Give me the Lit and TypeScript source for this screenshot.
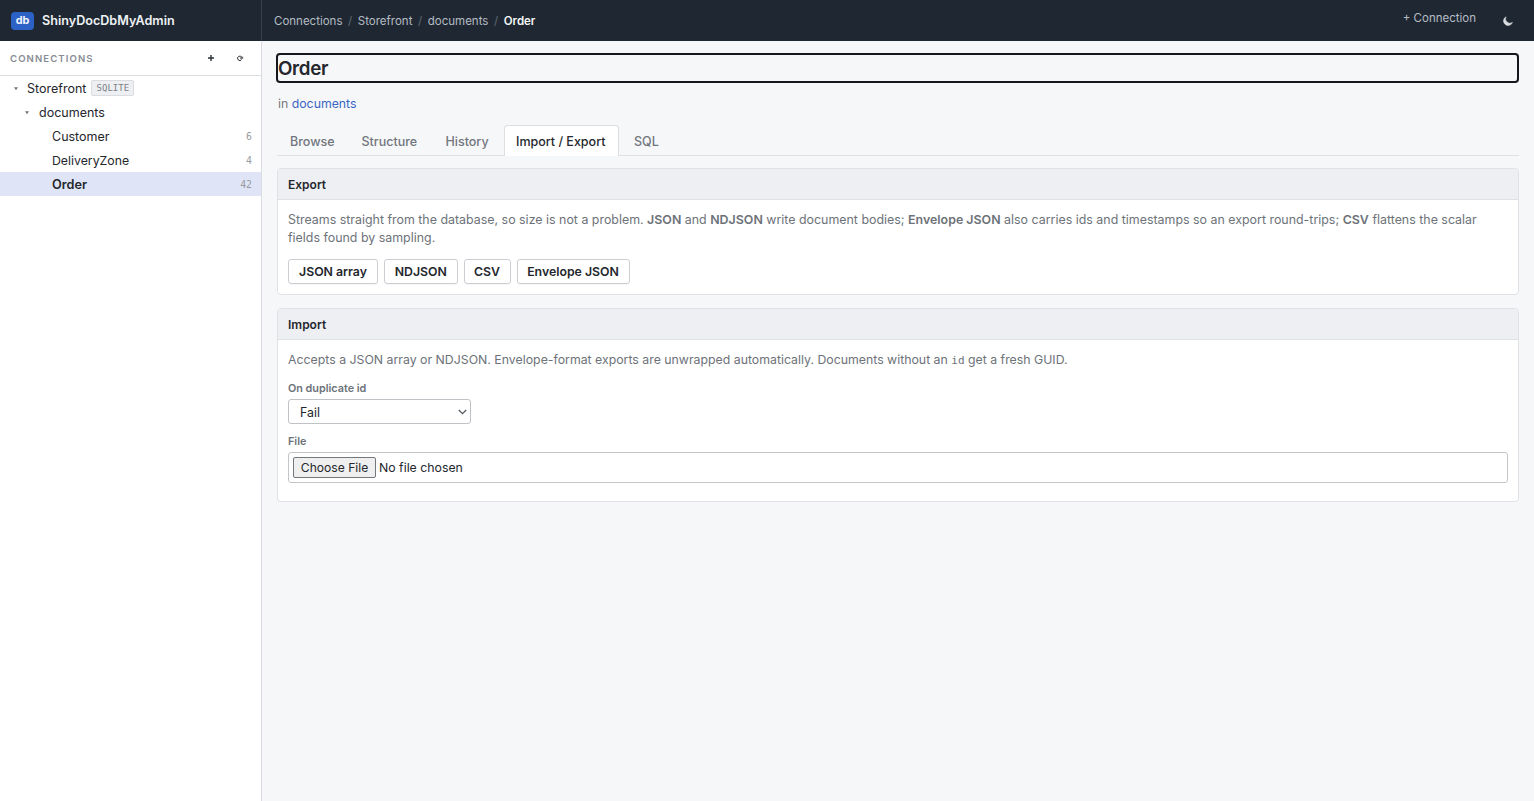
import { LitElement, html, css, svg } from "lit";
import { customElement } from "lit/decorators.js";

interface TreeItem { name: string; count: number; active?: boolean; track: string }

const items: TreeItem[] = [
  { name: "Customer", count: 6, track: "t-customer" },
  { name: "DeliveryZone", count: 4, track: "t-zone" },
  { name: "Order", count: 42, active: true, track: "t-order" },
];

const tabs = [
  { label: "Browse", cls: "w1" },
  { label: "Structure", cls: "w2" },
  { label: "History", cls: "w3" },
  { label: "Import / Export", cls: "w4 on" },
  { label: "SQL", cls: "w5" },
];

@customElement("app-root")
export class AppRoot extends LitElement {
  static styles = css`
    * { box-sizing: border-box; }
    :host {
      display: grid;
      grid-template-columns: 262px 1fr;
      grid-template-rows: 41px 1fr;
      width: 100%;
      height: 100vh;
      overflow: hidden;
      background: #f6f7f9;
      color: #24272d;
      font: 400 13px/18px Inter, "Liberation Sans", sans-serif;
    }
    .brand, .top { background: #1f2832; display: flex; align-items: center; height: 40.5px; padding-top: 1px; }
    .brand { padding-left: 11px; border-right: 1px solid #36404b; color: #eef1f4; font-weight: 600; font-size: 12.6px; }
    .logo { width: 23px; height: 18px; margin-right: 8px; border-radius: 4px; background: #2c62c6; color: #f1f5fc; font-size: 10.8px; line-height: 17px; text-align: center; font-weight: 700; }
    .top { padding: 1px 20px 0 12px; color: #b5bcc4; font-size: 11.5px; }
    .sep { color: #5f6973; margin: 0 5.6px; }
    .here { color: #f3f5f7; font-weight: 600; }
    .grow { flex: 1; }
    .add { margin: 0 26px 6px 0; }
    .moon { display: block; width: 12px; height: 12px; }

    aside { background: #fff; border-right: 1px solid #dadce0; }
    .sidehead { display: flex; align-items: center; height: 35px; padding: 0 16px 0 10px; border-bottom: 1px solid #dcdee2; }
    .cap { flex: 1; color: #888d94; font-size: 9.6px; font-weight: 600; letter-spacing: 1.08px; padding-top: 1px; }
    .icon { width: 10px; height: 10px; margin-left: 19px; }
    .row { display: flex; align-items: center; height: 24px; padding: 1px 9px 0 0; font-size: 12.5px; }
    .row.root { padding-left: 13px; }
    .row.store { padding-left: 24px; }
    .row.store .caret { margin-right: 9px; }
    .row.leaf { padding-left: 52px; }
    .row.active { background: #dfe5f6; font-weight: 600; }
    .t-order { font-size: 12.7px; }
    .t-zone { font-size: 12.3px; }
    .caret { width: 6px; height: 5px; margin-right: 8px; fill: #70757c; }
    .badge { margin-left: 5px; height: 16px; width: 43px; margin-top: -1px; border: 1px solid #dadce0; border-radius: 2px; background: #eeeff2; color: #7c8187; font: 9px/15px "DejaVu Sans Mono", monospace; text-align: center; }
    .count { margin-left: auto; color: #979ba1; font: 9.8px/16px "DejaVu Sans Mono", monospace; }

    main { padding: 14px 15px 0; }
    h1 { margin: 0 2px 0 1px; height: 26px; font-size: 18.8px; line-height: 27px; font-weight: 600; letter-spacing: -0.35px; outline: 2px solid #14171c; border-radius: 2px; }
    .sub { margin: 14px 0 0 1px; height: 18px; color: #777c83; font-size: 12.3px; }
    .link { color: #3b66c4; }
    nav { display: flex; align-items: flex-end; margin: 12px 0 0; height: 31px; border-bottom: 1px solid #dfe1e4; }
    .tab { height: 31px; padding: 0 11px; border: 1px solid transparent; border-bottom: 0; line-height: 34px; font-weight: 500; color: #71767d; margin-right: 3px; white-space: nowrap; font-size: 12.5px; }
    .tab.on { background: #fff; color: #25282e; border-color: #dcdee2; border-radius: 4px 4px 0 0; margin-bottom: -1px; line-height: 31px; }
    .w1 { width: 69px; padding-left: 12px; } .w2 { width: 81px; padding-left: 11.5px; } .w3 { width: 68px; padding-left: 11.5px; } .w4 { width: 115px; }

    section { background: #fff; border: 1px solid #dfe1e4; border-radius: 4px; overflow: hidden; }
    .export { margin-top: 12px; height: 127px; }
    .import { margin-top: 13px; height: 194px; }
    h2 { margin: 0; height: 31px; padding-left: 10px; background: #eeeff3; border-bottom: 1px solid #dfe1e4; font-size: 12px; line-height: 31px; font-weight: 600; }
    .body { padding: 11px 10px 0; }
    p { margin: 0; color: #6d7279; font-size: 12.42px; line-height: 18px; }
    .p2 { font-size: 12.32px; }
    b { font-weight: 600; }
    .btns { display: flex; gap: 6px; margin-top: 12px; }
    .btn { height: 25px; border: 1px solid #cbced3; border-radius: 3px; text-align: center; line-height: 23px; font-weight: 600; font-size: 12.3px; white-space: nowrap; box-shadow: 0 1px 1px #0000000a; }
    .b1 { width: 90px; } .b2 { width: 73.5px; } .b3 { width: 47px; } .b4 { width: 113px; }
    code { font: 11px "DejaVu Sans Mono", monospace; }
    .label { color: #6d7279; font-size: 10.8px; line-height: 14px; font-weight: 600; }
    .l1 { margin-top: 13px; }
    .l2 { margin-top: 11px; }
    .select { display: flex; align-items: center; justify-content: space-between; margin-top: 3px; width: 183px; height: 25px; padding: 2px 3px 0 11px; border: 1px solid #bfc2c7; border-radius: 3px; font-size: 12.4px; }
    .chev { width: 9px; height: 6px; margin-top: -2px; }
    .file { display: flex; align-items: center; margin-top: 3px; height: 31px; padding-left: 4px; border: 1px solid #c2c5ca; border-radius: 3px; font-size: 12.3px; }
    .choose { width: 83px; height: 21px; margin-right: 3px; border: 1px solid #74777b; border-radius: 2px; background: #efefef; text-align: center; line-height: 19px; white-space: nowrap; font-size: 12.1px; }
  `;

  caret() {
    return html`<svg class="caret" viewBox="0 0 6 5">${svg`<path d="M1 1.2h4L3 4.2z"/>`}</svg>`;
  }

  render() {
    return html`
      <div class="brand"><span class="logo">db</span><span class="bt">ShinyDocDbMyAdmin</span></div>
      <div class="top">
        <span>Connections</span><span class="sep">/</span><span>Storefront</span><span class="sep">/</span><span>documents</span><span class="sep">/</span><span class="here">Order</span>
        <span class="grow"></span>
        <span class="add">+ Connection</span>
        <svg class="moon" viewBox="0 0 12 12"><path d="M4.2 1.6A4.6 4.6 0 1 0 10.6 7.4 4.5 4.5 0 0 1 4.2 1.6Z" transform="translate(-.2 .2)" fill="#d9dce0" stroke="#d9dce0" stroke-width=".6" stroke-linejoin="round"/></svg>
      </div>
      <aside>
        <div class="sidehead">
          <span class="cap">CONNECTIONS</span>
          <svg class="icon" viewBox="0 0 10 10"><path d="M5 2v6M2 5h6" stroke="#2b2f35" stroke-width="1.4"/></svg>
          <svg class="icon" viewBox="0 0 10 10"><path d="M6.6 6.6A2.2 2.2 0 1 1 6.8 4.4M5 5.1h3.2M7 3.6V5" fill="none" stroke="#2b2f35" stroke-width="1"/></svg>
        </div>
        <div class="row root">${this.caret()}<span>Storefront</span><span class="badge">SQLITE</span></div>
        <div class="row store">${this.caret()}<span>documents</span></div>
        ${items.map((i) => html`<div class="row leaf ${i.active ? "active" : ""}"><span class=${i.track}>${i.name}</span><span class="count">${i.count}</span></div>`)}
      </aside>
      <main>
        <h1>Order</h1>
        <div class="sub">in <span class="link">documents</span></div>
        <nav>${tabs.map((t) => html`<span class="tab ${t.cls}">${t.label}</span>`)}</nav>
        <section class="export">
          <h2>Export</h2>
          <div class="body">
            <p class="p1">Streams straight from the database, so size is not a problem. <b>JSON</b> and <b>NDJSON</b> write document bodies; <b>Envelope JSON</b> also carries ids and timestamps so an export round-trips; <b>CSV</b> flattens the scalar<br>fields found by sampling.</p>
            <div class="btns"><span class="btn b1">JSON array</span><span class="btn b2">NDJSON</span><span class="btn b3">CSV</span><span class="btn b4">Envelope JSON</span></div>
          </div>
        </section>
        <section class="import">
          <h2>Import</h2>
          <div class="body">
            <p class="p2">Accepts a JSON array or NDJSON. Envelope-format exports are unwrapped automatically. Documents without an <code>id</code> get a fresh GUID.</p>
            <div class="label l1">On duplicate id</div>
            <div class="select"><span>Fail</span><svg class="chev" viewBox="0 0 9 6"><path d="M.8 1l3.7 3.7L8.2 1" fill="none" stroke="#555a60" stroke-width="1.3"/></svg></div>
            <div class="label l2">File</div>
            <div class="file"><span class="choose">Choose File</span><span>No file chosen</span></div>
          </div>
        </section>
      </main>
    `;
  }
}
